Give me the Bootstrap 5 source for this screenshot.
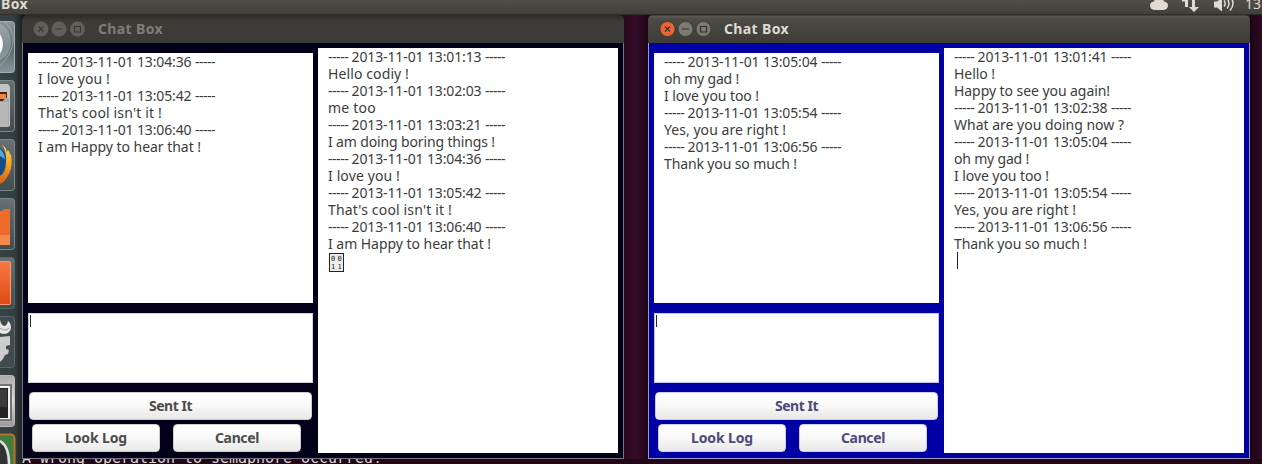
<!DOCTYPE html>
<html lang="en">
<head>
<meta charset="utf-8">
<title>Chat Box</title>
<link href="https://cdn.jsdelivr.net/npm/bootstrap@5.3.0/dist/css/bootstrap.min.css" rel="stylesheet">
<style>
body{width:1262px;height:464px;background:#300a24;font-family:"Noto Sans","Open Sans",sans-serif;font-size:14px;line-height:17px;color:#3c3c3c}
.top-panel{height:15px;background:linear-gradient(#504e47,#403f3a 92%,#22211e);color:#dfdbd2;line-height:17px}
.top-name{font-weight:700;margin-top:-5px;margin-left:1px}
.top-clock{margin-top:-5px;width:17px;white-space:nowrap}
.launcher{width:22px;background:linear-gradient(90deg,#374244,#333e40 65%,#1c2324)}
.launcher svg{display:block}
.desk{background:linear-gradient(90deg,#250819,#300a24 3%,#300a24)}
.gutter{width:24px;background:linear-gradient(90deg,#280a1e,#330b26 40%,#300a24 65%,#1b0614)}
.edge{width:12px;background:linear-gradient(90deg,#1b0614,#300a24)}
.win{width:602px;height:444px}
.title-bar{height:28px;background:linear-gradient(#2b2a27,#3c3b37 22%,#3c3b37);color:#807d76;font-weight:700;font-size:14px;padding-left:10px;border-radius:5px 5px 0 0}
.title-bar svg{margin-right:12px}
.title-bar .caption-text{margin-top:-1px}
.active .title-bar{background:linear-gradient(#35342f 0,#5a5850 5%,#4b4a43 15%,#3d3c37);color:#dfdbd2}
.client{height:416px;background:#03001a;border:1px solid #77757f;border-top:0;padding:5px}
.active .client{background:#0000a5;border-color:#9d9abf}
.pane{background:#fff;padding-left:10px}
.log-own{width:285px;height:250px;margin-top:5px}
.log-all{width:300px;height:405px;margin-left:5px}
.entry{width:285px;height:70px;margin-top:10px;padding:1px;background:#fff;border:1px solid #d4d4dc}
.active .entry{border-color:#c4c4f2}
.caret{display:block;width:1px;height:12px;background:#222}
.caret.tall{height:17px;margin-left:3px}
.ln{height:17px;white-space:pre}
.ubtn{padding:0;border:1px solid #cfcdca;border-radius:4px;background:linear-gradient(#fff,#fafafa 45%,#e9e8e7);color:#4c4c4c;font-size:14px;font-weight:700;height:28px;line-height:26px}
.active .ubtn{color:#4c4a78;border-color:#cdccee}
.send{width:283px;margin:9px 0 0 1px}
.pair{margin:4px 0 0 4px;gap:13px}
.pair .ubtn{width:128px}
.term{height:5px;overflow:hidden;color:#d9d3d6;font:15px/18px "DejaVu Sans Mono",monospace;background:#220718}
.term span{margin-top:-10px}
</style>
<script src="https://cdn.jsdelivr.net/npm/bootstrap@5.3.0/dist/js/bootstrap.bundle.min.js"></script>
</head>
<body class="m-0 overflow-hidden d-flex flex-column">
<header class="top-panel d-flex flex-shrink-0 overflow-hidden">
  <div class="top-name"><span data-w="27">Box</span></div>
  <svg class="ms-auto" width="96" height="15" viewBox="0 0 96 15" fill="#dfdbd2">
    <path d="M5 10q-4-1-4-4.500q0-3.500 4-4q1-4 5-4t5 4q4 .5 4 4q0 3.500-4 4.500z"/>
    <path d="M36 0h3v7h-3zM33 0h6v1.500h-6zM43 0h3v7h4l-5 5-5-5h3z"/>
    <path d="M65 1.500h3l5-4v14l-5-4h-3z"/>
    <path d="M75 .5q2.500 3 0 6M78-1.500q4 5 0 10M81-3.500q6 7 0 14" fill="none" stroke="#dfdbd2" stroke-width="1.500"/>
  </svg>
  <div class="top-clock">13</div>
</header>
<main class="d-flex flex-grow-1">
  <nav class="launcher flex-shrink-0">
    <svg width="22" height="449" viewBox="0 15 22 449">
      <defs>
        <linearGradient id="steel" x2="0" y2="1"><stop stop-color="#8b979a"/><stop offset=".5" stop-color="#58666b"/><stop offset="1" stop-color="#87969b"/></linearGradient>
        <linearGradient id="grey" x2="0" y2="1"><stop stop-color="#687072"/><stop offset="1" stop-color="#424b4d"/></linearGradient>
        <linearGradient id="silver" x2="0" y2="1"><stop stop-color="#aaa"/><stop offset=".5" stop-color="#ddd"/><stop offset="1" stop-color="#999"/></linearGradient>
        <linearGradient id="orange" x2="0" y2="1"><stop stop-color="#f57a45"/><stop offset="1" stop-color="#e24912"/></linearGradient>
        <linearGradient id="flame" x2="0" y2="1"><stop stop-color="#ffd75a"/><stop offset=".5" stop-color="#f7a321"/><stop offset="1" stop-color="#d85b12"/></linearGradient>
      </defs>
      <g stroke="#7d888a" fill="url(#grey)">
        <rect x="-30" y="21.500" width="44.500" height="51" rx="3" fill="url(#steel)" stroke="#a4afb2"/>
        <rect x="-30" y="80.500" width="44.500" height="51" rx="3"/>
        <rect x="-30" y="139.500" width="44.500" height="51" rx="3"/>
        <rect x="-30" y="198.500" width="44.500" height="51" rx="3"/>
        <rect x="-30" y="257.500" width="44.500" height="51" rx="3" stroke="#59666a"/>
        <rect x="-30" y="316.500" width="44.500" height="51" rx="3" fill="#414b4d" stroke="#59666a"/>
        <rect x="-30" y="375.500" width="44.500" height="51" rx="3" fill="url(#silver)" stroke="#bbb"/>
      </g>
      <path d="M0 24q11 5 11 18T0 60" fill="#b3bec1" opacity=".45"/>
      <path d="M5 22q9 8 8 20T0 66" fill="none" stroke="#c2cbcd" opacity=".5"/>
      <path d="M0 34q3 5 3 10T0 54z" fill="#fff"/>
      <path d="M0 84h8l2 3v39H0z" fill="#c3c3c3"/>
      <path d="M0 92h7v9H0z" fill="#462414"/><path d="M0 94h6v5H0z" fill="#e98743"/>
      <path d="M0 101h3l2-3h4v29H0z" fill="#a9a9a9"/><path d="M0 102h8v25H0z" fill="#b7b7b7"/>
      <path d="M0 148q7 4 7 16T0 180z" fill="#164d88"/><path d="M0 149q4 3 5 10l-5-3z" fill="#5aa7d8"/>
      <path d="M2 145q4 2 5 7l1-2q2 2 2 5l1-1q2 12-2 20T0 184v-8q6-4 6-14 1-11-4-17z" fill="url(#flame)"/>
      <path d="M0 211h2l2-2h6v36H0z" fill="#ef6b2b"/><path d="M0 235h10v10H0z" fill="#f28a4b"/>
      <rect x="-9" y="261.500" width="19.500" height="43" rx="1" fill="url(#orange)" stroke="#ff9a70"/>
      <path d="M0 320q1 5 4 6 3 0 4-5 3 2 3 7-1 6-8 6l-3-1z" fill="#e6e6e6"/>
      <path d="M0 337l10-1v9l-4 1v3l3 1-1 4-3 1-2 4-3 3z" fill="#cdcdcd"/>
      <path d="M0 328q5 4 9 0" fill="none" stroke="#999"/>
      <path d="M0 384h12v37H0z" fill="#737373"/><path d="M0 386h10v33H0z" fill="#f1f1f1"/><path d="M0 388h8v30H0z" fill="#222"/><path d="M0 389h7v18H0z" fill="#3b3b3b"/>
      <rect x="-30" y="434.500" width="44.500" height="51" rx="4" fill="#3f7c3d" stroke="#b9722d" stroke-width="2"/>
      <path d="M0 441q9 4 9 22v3H0z" fill="#333"/><path d="M0 441q9 5 9 23" fill="none" stroke="#e2e2e2" stroke-width="2.500"/>
    </svg>
  </nav>
  <div class="desk flex-grow-1 d-flex flex-column">
    <div class="d-flex">
      <section class="win">
        <div class="title-bar d-flex align-items-center">
          <svg width="54" height="18" viewBox="0 0 54 18"><g fill="#615f59"><circle cx="9" cy="9" r="7.500"/><circle cx="27" cy="9" r="7.500"/><circle cx="45.500" cy="9" r="7.500"/></g><path d="M6.500 6.500l5 5m0-5l-5 5M23.500 9h7M42.500 6.500h6v5.500h-6z" fill="none" stroke="#393833" stroke-width="1.200"/></svg>
          <div class="caption-text"><span data-w="65">Chat Box</span></div>
        </div>
        <div class="client d-flex">
          <div>
            <div class="pane log-own">
              <div class="ln date">----- 2013-11-01 13:04:36 -----</div>
              <div class="ln"><span data-w="72">I love you !</span></div>
              <div class="ln date">----- 2013-11-01 13:05:42 -----</div>
              <div class="ln"><span data-w="124">That's cool isn't it !</span></div>
              <div class="ln date">----- 2013-11-01 13:06:40 -----</div>
              <div class="ln"><span data-w="163">I am Happy to hear that !</span></div>
            </div>
            <div class="entry"><i class="caret"></i></div>
            <button class="btn ubtn send d-block"><span data-w="43">Sent It</span></button>
            <div class="pair d-flex"><button class="btn ubtn"><span data-w="62">Look Log</span></button><button class="btn ubtn"><span data-w="44">Cancel</span></button></div>
          </div>
          <div class="pane log-all">
            <div class="ln date">----- 2013-11-01 13:01:13 -----</div>
            <div class="ln"><span data-w="81">Hello codiy !</span></div>
            <div class="ln date">----- 2013-11-01 13:02:03 -----</div>
            <div class="ln"><span data-w="48">me too</span></div>
            <div class="ln date">----- 2013-11-01 13:03:21 -----</div>
            <div class="ln"><span data-w="167">I am doing boring things !</span></div>
            <div class="ln date">----- 2013-11-01 13:04:36 -----</div>
            <div class="ln"><span data-w="72">I love you !</span></div>
            <div class="ln date">----- 2013-11-01 13:05:42 -----</div>
            <div class="ln"><span data-w="124">That's cool isn't it !</span></div>
            <div class="ln date">----- 2013-11-01 13:06:40 -----</div>
            <div class="ln"><span data-w="163">I am Happy to hear that !</span></div>
            <svg class="d-block" width="17" height="21" viewBox="0 0 17 21"><rect x="1.500" y="1.500" width="14" height="18" fill="#ececec" stroke="#222"/><g font-family="DejaVu Sans Mono" font-size="7" fill="#222"><text x="3" y="9">0</text><text x="9.500" y="9">0</text><text x="3" y="17">1</text><text x="9.500" y="17">1</text></g></svg>
          </div>
        </div>
      </section>
      <div class="gutter"></div>
      <section class="win active">
        <div class="title-bar d-flex align-items-center">
          <svg width="54" height="18" viewBox="0 0 54 18"><g fill="#7b7970" stroke="#35342f" stroke-width=".7"><circle cx="9.500" cy="9" r="7.500" fill="#ed6434"/><circle cx="27.500" cy="9" r="7.500"/><circle cx="45.500" cy="9" r="7.500"/></g><path d="M7 6.500l5 5m0-5l-5 5M24 9h7M42.500 6.500h6v5.500h-6z" fill="none" stroke="#35302b" stroke-width="1.200"/></svg>
          <div class="caption-text"><span data-w="65">Chat Box</span></div>
        </div>
        <div class="client d-flex">
          <div>
            <div class="pane log-own">
              <div class="ln date">----- 2013-11-01 13:05:04 -----</div>
              <div class="ln"><span data-w="75">oh my gad !</span></div>
              <div class="ln"><span data-w="95">I love you too !</span></div>
              <div class="ln date">----- 2013-11-01 13:05:54 -----</div>
              <div class="ln"><span data-w="122">Yes, you are right !</span></div>
              <div class="ln date">----- 2013-11-01 13:06:56 -----</div>
              <div class="ln"><span data-w="133">Thank you so much !</span></div>
            </div>
            <div class="entry"><i class="caret"></i></div>
            <button class="btn ubtn send d-block"><span data-w="43">Sent It</span></button>
            <div class="pair d-flex"><button class="btn ubtn"><span data-w="62">Look Log</span></button><button class="btn ubtn"><span data-w="44">Cancel</span></button></div>
          </div>
          <div class="pane log-all">
            <div class="ln date">----- 2013-11-01 13:01:41 -----</div>
            <div class="ln"><span data-w="41">Hello !</span></div>
            <div class="ln"><span data-w="156">Happy to see you again!</span></div>
            <div class="ln date">----- 2013-11-01 13:02:38 -----</div>
            <div class="ln"><span data-w="170">What are you doing now ?</span></div>
            <div class="ln date">----- 2013-11-01 13:05:04 -----</div>
            <div class="ln"><span data-w="75">oh my gad !</span></div>
            <div class="ln"><span data-w="95">I love you too !</span></div>
            <div class="ln date">----- 2013-11-01 13:05:54 -----</div>
            <div class="ln"><span data-w="122">Yes, you are right !</span></div>
            <div class="ln date">----- 2013-11-01 13:06:56 -----</div>
            <div class="ln"><span data-w="133">Thank you so much !</span></div>
            <i class="caret tall"></i>
          </div>
        </div>
      </section>
      <div class="edge"></div>
    </div>
    <div class="term d-flex align-items-start"><span data-w="360">A wrong operation to semaphore occurred!</span></div>
  </div>
</main>
<script>
// Split date lines so that dashes and digits are tracked separately.
document.querySelectorAll('.date').forEach(el => {
  const p = el.textContent.split(' ');
  el.innerHTML = `<span data-w="23.500">${p[0]} </span><span data-w="75.500">${p[1]} </span><span data-w="58">${p[2]} </span><span data-w="20">${p[3]}</span>`;
});
// Track each run to its intended width.
document.querySelectorAll('[data-w]').forEach(el => {
  el.style.display = 'inline-block';
  el.style.whiteSpace = 'pre';
  const natural = el.getBoundingClientRect().width;
  el.style.letterSpacing = (el.dataset.w - natural) / el.textContent.length + 'px';
});
</script>
</body>
</html>
